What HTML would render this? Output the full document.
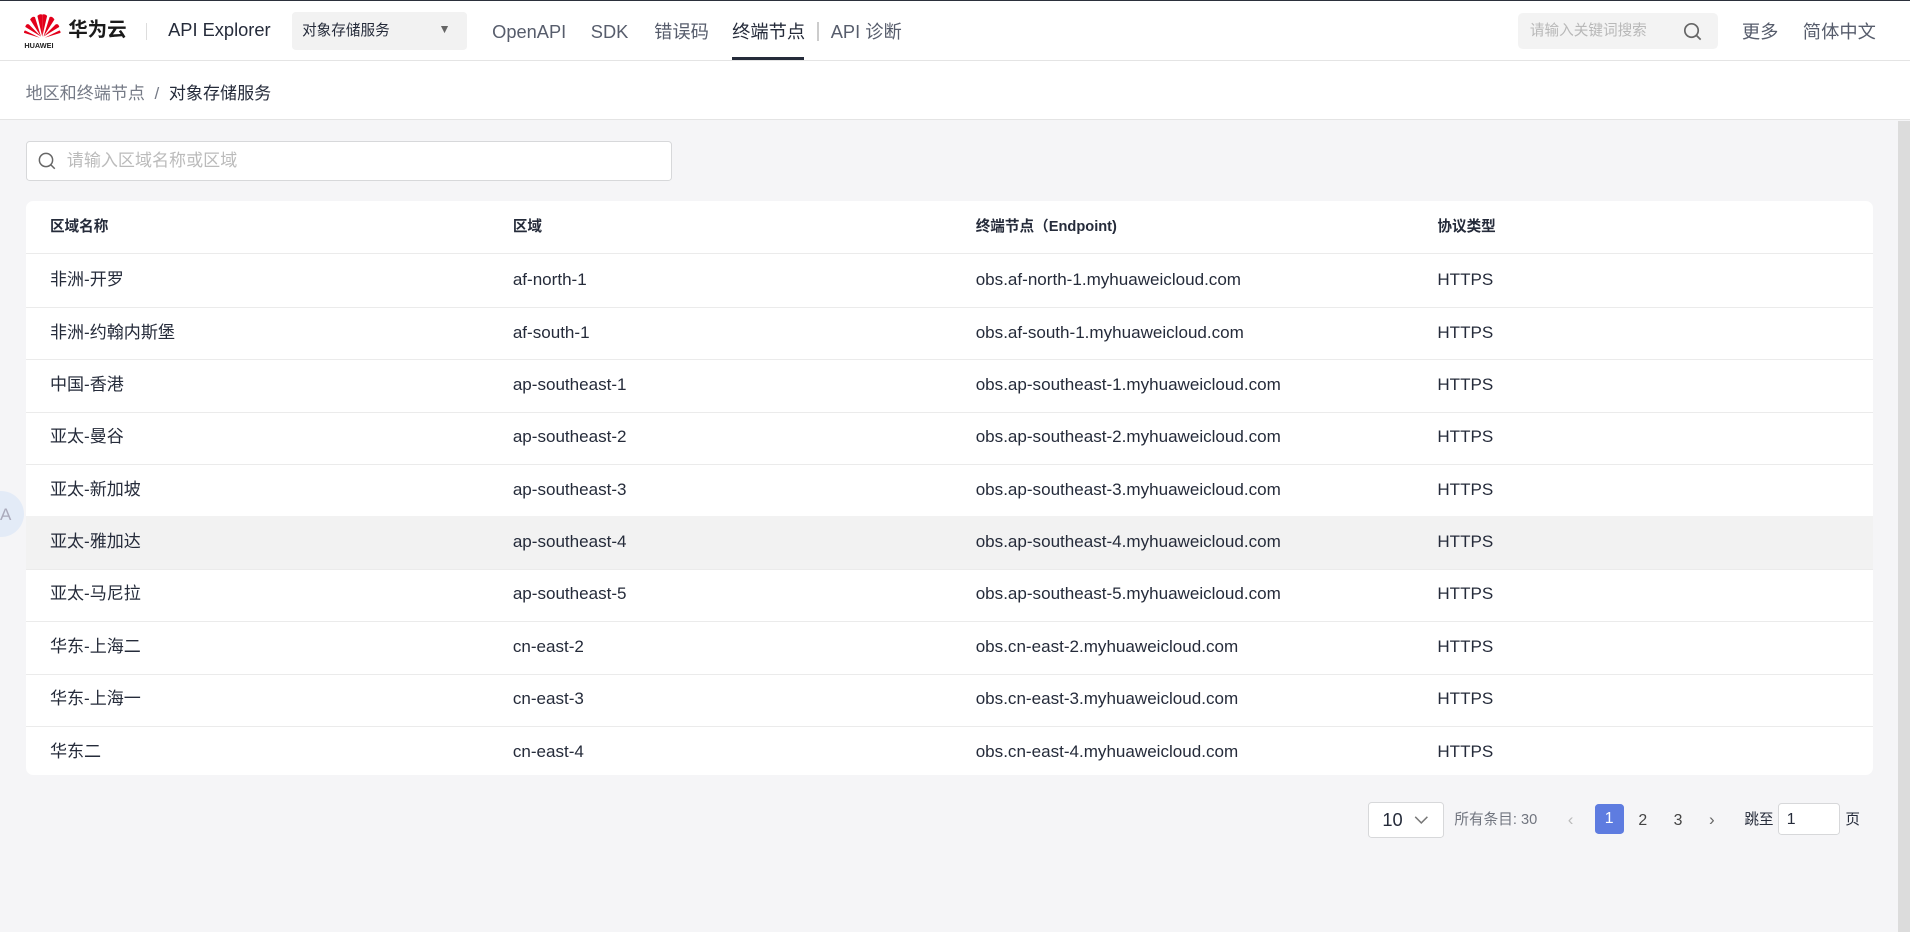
<!DOCTYPE html>
<html><head><meta charset="utf-8"><style>
html,body{margin:0;padding:0}
body{width:1568px;height:765px;overflow:hidden;zoom:1.21811;background:#f5f5f7;font-family:"Liberation Sans","Noto Sans CJK SC",sans-serif;color:#252b3a;position:relative;line-height:1.25}
.top{position:absolute;left:0;top:0;width:1568px;height:1px;background:#2b303b}
.hdr{position:absolute;top:1px;left:0;width:1568px;height:48px;background:#fff;border-bottom:1px solid #e4e4e4}
.a{position:absolute;white-space:nowrap}
.crumb{position:absolute;top:50px;left:0;width:1568px;height:48px;background:#fff;border-bottom:1px solid #e4e4e4}
.nav{font-size:15px;color:#575d6c;top:16px}
.card{position:absolute;left:21px;top:165px;width:1517px;height:471px;background:#fff;border-radius:6px;overflow:hidden}
.row{position:absolute;left:0;width:1517px;height:43px;border-bottom:1px solid #ebebeb;font-size:14px}
.row span{position:absolute;top:12px}
.hd span{font-size:12px;font-weight:bold;top:14px}
</style></head><body>
<div class="top"></div>
<div class="hdr">
 <svg class="a" style="left:20px;top:8px" width="30" height="24" viewBox="0 0 30 22">
  <g fill="#e3001b">
   <path d="M15 20 L11 3 Q13 1 15 2Z"/><path d="M15 20 L19 3 Q17 1 15 2Z"/>
   <path d="M14 20 L5 6 Q7 3 9 4Z"/><path d="M16 20 L25 6 Q23 3 21 4Z"/>
   <path d="M14 20 L1 12 Q2 9 4 10Z"/><path d="M16 20 L29 12 Q28 9 26 10Z"/>
   <path d="M13 21 L0 17 Q0 15 1 15Z"/><path d="M17 21 L30 17 Q30 15 29 15Z"/>
  </g></svg>
 <div class="a" style="left:20px;top:33px;font-size:6px;font-weight:bold;color:#222">HUAWEI</div>
 <div class="a" style="left:56px;top:14px;font-size:16px;font-weight:bold;color:#1a1a1a">华为云</div>
 <div class="a" style="left:120px;top:18px;width:1px;height:14px;background:#ddd"></div>
 <div class="a" style="left:138px;top:15px;font-size:15px;color:#252b3a">API Explorer</div>
 <div class="a" style="left:240px;top:9px;width:143px;height:31px;background:#f2f2f2;border-radius:3px">
  <span class="a" style="left:8px;top:8px;font-size:12px">对象存储服务</span>
  <span class="a" style="left:120px;top:8px;font-size:10px;color:#666">▼</span></div>
 <div class="a nav" style="left:404px">OpenAPI</div>
 <div class="a nav" style="left:485px">SDK</div>
 <div class="a nav" style="left:537px">错误码</div>
 <div class="a nav" style="left:601px;color:#252b3a">终端节点</div>
 <div class="a" style="left:601px;top:46px;width:59px;height:2px;background:#252b3a"></div>
 <div class="a" style="left:671px;top:17px;width:1px;height:16px;background:#ccc"></div>
 <div class="a nav" style="left:682px">API 诊断</div>
 <div class="a" style="left:1246px;top:10px;width:164px;height:29px;background:#f3f3f3;border-radius:4px">
  <span class="a" style="left:10px;top:7px;font-size:12px;color:#b8b8b8">请输入关键词搜索</span>
  <svg class="a" style="left:136px;top:7px" width="16" height="16" viewBox="0 0 16 16" fill="none" stroke="#666" stroke-width="1.4"><circle cx="7" cy="7" r="5.5"/><path d="M11 11l3.5 3.5"/></svg></div>
 <div class="a nav" style="left:1430px">更多</div>
 <div class="a nav" style="left:1480px">简体中文</div>
</div>
<div class="crumb">
 <div class="a" style="left:21px;top:18px;font-size:14px;color:#757a86">地区和终端节点 <span style="margin:0 4px">/</span> <span style="color:#252b3a">对象存储服务</span></div>
</div>
<div class="a" style="left:1558px;top:99px;width:10px;height:666px;background:#dcdcdc"></div>
<div class="a" style="left:21px;top:116px;width:529px;height:31px;background:#fff;border:1px solid #d7d8da;border-radius:3px">
 <svg class="a" style="left:9px;top:8px" width="15" height="15" viewBox="0 0 16 16" fill="none" stroke="#666" stroke-width="1.3"><circle cx="7" cy="7" r="5.8"/><path d="M11.2 11.2l3.5 3.5"/></svg>
 <span class="a" style="left:33px;top:6px;font-size:14px;color:#bbb">请输入区域名称或区域</span></div>
<div class="card">
 <div class="row hd" style="top:0"><span style="left:20px">区域名称</span><span style="left:400px">区域</span><span style="left:780px">终端节点（Endpoint)</span><span style="left:1159px">协议类型</span></div>
 <div class="row" style="top:44px"><span style="left:20px">非洲-开罗</span><span style="left:400px">af-north-1</span><span style="left:780px">obs.af-north-1.myhuaweicloud.com</span><span style="left:1159px">HTTPS</span></div>
 <div class="row" style="top:87px"><span style="left:20px">非洲-约翰内斯堡</span><span style="left:400px">af-south-1</span><span style="left:780px">obs.af-south-1.myhuaweicloud.com</span><span style="left:1159px">HTTPS</span></div>
 <div class="row" style="top:130px"><span style="left:20px">中国-香港</span><span style="left:400px">ap-southeast-1</span><span style="left:780px">obs.ap-southeast-1.myhuaweicloud.com</span><span style="left:1159px">HTTPS</span></div>
 <div class="row" style="top:173px"><span style="left:20px">亚太-曼谷</span><span style="left:400px">ap-southeast-2</span><span style="left:780px">obs.ap-southeast-2.myhuaweicloud.com</span><span style="left:1159px">HTTPS</span></div>
 <div class="row" style="top:216px"><span style="left:20px">亚太-新加坡</span><span style="left:400px">ap-southeast-3</span><span style="left:780px">obs.ap-southeast-3.myhuaweicloud.com</span><span style="left:1159px">HTTPS</span></div>
 <div class="row" style="top:259px;background:#f2f2f2"><span style="left:20px">亚太-雅加达</span><span style="left:400px">ap-southeast-4</span><span style="left:780px">obs.ap-southeast-4.myhuaweicloud.com</span><span style="left:1159px">HTTPS</span></div>
 <div class="row" style="top:302px"><span style="left:20px">亚太-马尼拉</span><span style="left:400px">ap-southeast-5</span><span style="left:780px">obs.ap-southeast-5.myhuaweicloud.com</span><span style="left:1159px">HTTPS</span></div>
 <div class="row" style="top:345px"><span style="left:20px">华东-上海二</span><span style="left:400px">cn-east-2</span><span style="left:780px">obs.cn-east-2.myhuaweicloud.com</span><span style="left:1159px">HTTPS</span></div>
 <div class="row" style="top:388px"><span style="left:20px">华东-上海一</span><span style="left:400px">cn-east-3</span><span style="left:780px">obs.cn-east-3.myhuaweicloud.com</span><span style="left:1159px">HTTPS</span></div>
 <div class="row" style="top:431px;border:none"><span style="left:20px">华东二</span><span style="left:400px">cn-east-4</span><span style="left:780px">obs.cn-east-4.myhuaweicloud.com</span><span style="left:1159px">HTTPS</span></div>
</div>
<div class="a" style="left:-18px;top:403px;width:38px;height:38px;border-radius:50%;background:#e3ebf7"><span class="a" style="left:18px;top:11px;font-size:14px;color:#aab">A</span></div>
<div class="a" style="left:1123px;top:658px;width:61px;height:28px;background:#fff;border:1px solid #d7d8da;border-radius:3px">
 <span class="a" style="left:11px;top:5px;font-size:15px">10</span>
 <svg class="a" style="left:37px;top:10px" width="12" height="8" viewBox="0 0 12 8" fill="none" stroke="#777" stroke-width="1.2"><path d="M1 1.5l5 5 5-5"/></svg></div>
<div class="a" style="left:1194px;top:666px;font-size:12px;color:#71757f">所有条目: 30</div>
<div class="a" style="left:1287px;top:664px;font-size:14px;color:#bbb">‹</div>
<div class="a" style="left:1309px;top:660px;width:24px;height:25px;background:#5e7ce0;border-radius:3px;color:#fff;font-size:13px;text-align:center;line-height:25px">1</div>
<div class="a" style="left:1345px;top:666px;font-size:13px;color:#444">2</div>
<div class="a" style="left:1374px;top:666px;font-size:13px;color:#444">3</div>
<div class="a" style="left:1403px;top:664px;font-size:14px;color:#666">›</div>
<div class="a" style="left:1432px;top:666px;font-size:12px">跳至</div>
<div class="a" style="left:1460px;top:659px;width:49px;height:25px;background:#fff;border:1px solid #d7d8da;border-radius:3px"><span class="a" style="left:6px;top:5px;font-size:13px">1</span></div>
<div class="a" style="left:1515px;top:666px;font-size:12px">页</div>
</body></html>
